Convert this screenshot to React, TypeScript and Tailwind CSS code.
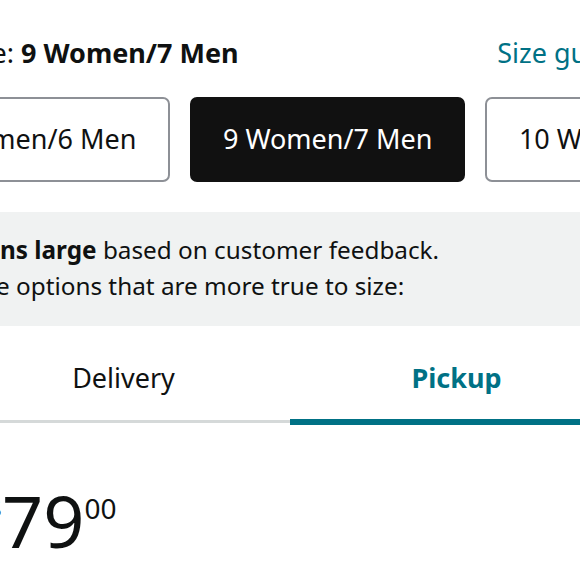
import React from "react";

export default function App() {
  const font = { fontFamily: "'Noto Sans', Roboto, sans-serif" };
  return (
    <div className="w-[580px] h-[580px] overflow-hidden bg-white text-[#0f1111]" style={font}>
      <div className="w-[666px] -ml-[43px] flex flex-col">
        {/* Title row */}
        <div className="mt-[36px] flex items-baseline justify-between text-[27px] leading-[34px]">
          <div>
            <span>Size: </span>
            <span className="font-bold">9 Women/7 Men</span>
          </div>
          <span className="-mr-[3px] text-[#007185]">Size guide</span>
        </div>

        {/* Size buttons */}
        <div className="mt-[27px] -ml-[64px] flex gap-[20px]">
          <div className="h-[85px] shrink-0 whitespace-nowrap rounded-[7px] border-2 border-[#8d9096] bg-white px-[32px] flex items-center justify-center text-[27px]">
            8 Women/6 Men
          </div>
          <div className="h-[85px] shrink-0 whitespace-nowrap rounded-[7px] border-2 border-[#111111] bg-[#111111] px-[30.5px] text-white flex items-center justify-center text-[27px]">
            9 Women/7 Men
          </div>
          <div className="h-[85px] shrink-0 whitespace-nowrap rounded-[7px] border-2 border-[#8d9096] bg-white px-[32px] flex items-center justify-center text-[27px]">
            10 Women/8 Men
          </div>
        </div>

        {/* Fit banner */}
        <div className="mt-[30px] h-[114px] bg-[#f0f2f2] pt-[20px] pl-[43px] text-[24.3px] leading-[36px]">
          <div className="whitespace-nowrap">
            <span className="font-bold">ns large</span> based on customer feedback.
          </div>
          <div className="whitespace-nowrap -ml-[4px]">e options that are more true to size:</div>
        </div>

        {/* Tabs */}
        <div className="flex h-[97px] border-b-[3px] border-[#d5d9d9]">
          <div className="flex-1 flex items-center justify-center pt-[10px] text-[27px]">Delivery</div>
          <div className="relative flex-1 flex items-center justify-center pt-[10px] text-[27px] font-bold text-[#007185]">
            Pickup
            <span className="absolute left-0 right-0 bottom-[-5px] h-[6px] bg-[#007185]" />
          </div>
        </div>

        {/* Price */}
        <div className="mt-[62px] pl-[29px] flex items-start">
          <span className="text-[28px] leading-[30px] mt-[8px]">$</span>
          <span className="text-[72px] leading-[70px]">79</span>
          <span className="text-[28px] leading-[30px] mt-[8px]">00</span>
        </div>
      </div>
    </div>
  );
}
